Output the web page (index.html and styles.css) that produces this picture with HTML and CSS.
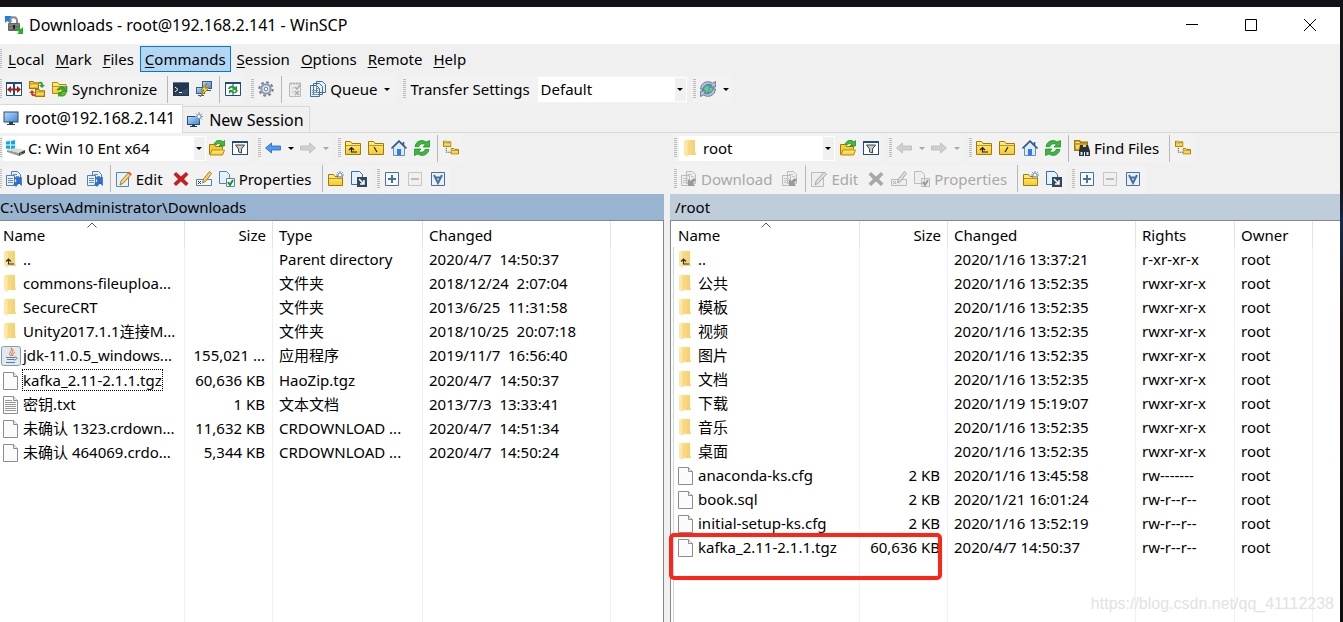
FILE: index.html
```html
<!DOCTYPE html>
<html lang="en">
<head>
<meta charset="utf-8">
<title>Downloads - root@192.168.2.141 - WinSCP</title>
<link rel="stylesheet" href="styles.css">
</head>
<body>
<svg class="defs" aria-hidden="true">
  <defs>
    <linearGradient id="fold" x1="0" x2="1"><stop offset="0" stop-color="#fbe092"/><stop offset="1" stop-color="#f5cf68"/></linearGradient>
    <linearGradient id="blue" x1="0" x2="1" y1="0" y2="1"><stop offset="0" stop-color="#b5dbff"/><stop offset="1" stop-color="#3f86d8"/></linearGradient>
    <linearGradient id="yel" x1="0" x2="0" y1="0" y2="1"><stop offset="0" stop-color="#fff08a"/><stop offset="1" stop-color="#f4c92e"/></linearGradient>
  </defs>
  <symbol id="app" viewBox="0 0 20 20"><path d="M1 1h7L6 3l2 3-2 2-3-2-2 2z" fill="#1c7df0"/><path d="M6 9V6c0-5 7-5 7 0v3" fill="none" stroke="#888" stroke-width="2"/><rect x="4" y="8" width="12" height="8" rx="1" fill="#666"/><path d="M5 10h10M5 13h10" stroke="#9b9b9b"/><path d="M9 10h2v4H9z" fill="#222"/><path d="M19 19v-7l-2 2-3-2-2 2 3 3-2 2z" fill="#21b421"/></symbol>
  <symbol id="compare" viewBox="0 0 16 16"><path d="M.5 1.500h7v13h-7zM8.500 1.500h7v13h-7z" fill="#fff" stroke="#204a82"/><path d="M0 2h16" stroke="#204a82" stroke-width="2"/><path d="M4 8.500h8" stroke="#b01818" stroke-width="2"/><path d="M5 5v7L1 8.500zM11 5v7l4-3.500z" fill="#b01818"/></symbol>
  <symbol id="mini" viewBox="0 0 9 7"><path d="M.5 6.500v-6h3l1 1h4v5z" fill="url(#yel)" stroke="#a87900"/><path d="M1 2.500h7" stroke="#b98c12"/></symbol>
  <symbol id="sync2" viewBox="0 0 16 16"><use href="#mini" x="0" y="0" width="10" height="8"/><use href="#mini" x="6" y="8" width="10" height="8"/><path d="M10 1c3-1 4 1 4 3h2l-3 3-3-3h2c0-1-1-2-2-1z" fill="#23a53a"/><path d="M6 15c-3 1-4-1-4-3H0l3-3 3 3H4c0 1 1 2 2 1z" fill="#d63421"/></symbol>
  <symbol id="folder" viewBox="0 0 16 16"><path d="M.5 14.500v-13h5l1.500 2h8.500v11z" fill="url(#yel)" stroke="#a87900"/><path d="M1 5.500h14" stroke="#c19516"/></symbol>
  <symbol id="sync" viewBox="0 0 16 16"><path d="M.5 12.500v-11h5l1.500 2h7v9z" fill="url(#yel)" stroke="#b28709"/><path d="M1 5.500h12" stroke="#c19516"/><path d="M5 9c2-4 6-4 8-2l2-2v6H9l2-2c-2-1-3-1-4 0z" fill="#2eac34" stroke="#137922" stroke-width=".5"/><path d="M6 11h5l-2 2c2 1 4 0 5-1 0 4-5 4-7 3l-1 1z" fill="#2eac34"/></symbol>
  <symbol id="term" viewBox="0 0 16 16"><rect width="16" height="14" y="1" fill="#24364b"/><path d="M0 1.500h16" stroke="#5c7e9f"/><path d="M1 14h14V7z" fill="#304b68"/><path d="M2 6l3 2.500L2 11M6 11.500h3" fill="none" stroke="#fff"/></symbol>
  <symbol id="putty" viewBox="0 0 16 16"><rect x="6.500" y=".5" width="9" height="7" fill="url(#blue)" stroke="#435b7a"/><rect x=".5" y="6.500" width="8" height="6" fill="url(#blue)" stroke="#435b7a"/><path d="M2 14.500h6M10 9.500h5" stroke="#435b7a"/><path d="M11 2L5 9l3 0-4 7 9-9-4 0z" fill="#ffd52a" stroke="#9b7100" stroke-width=".8"/></symbol>
  <symbol id="keep" viewBox="0 0 16 16"><path d="M.5 1.500h15v13H.5zM8 2v12" fill="#fff" stroke="#204a82"/><path d="M0 2h16" stroke="#204a82" stroke-width="2"/><path d="M3 8c1-4 5-4 7-2l2-1v4H8l1-1C7 6 6 7 5 8zM13 9c-1 4-5 4-7 2l-2 2V9h4l-1 1c2 2 3 1 4-1z" fill="#209c35"/></symbol>
  <symbol id="gear" viewBox="0 0 16 16"><circle cx="8" cy="8" r="6.700" fill="none" stroke="#728093" stroke-width="2" stroke-dasharray="2.700 2.560"/><circle cx="8" cy="8" r="4.700" fill="#dce4ed" stroke="#8a98aa" stroke-width="2"/><circle cx="8" cy="8" r="1.800" fill="#f8f8f8" stroke="#728093"/></symbol>
  <symbol id="queuex" viewBox="0 0 16 16"><path d="M2.500 2.500h11v13h-11z" fill="#ececec" stroke="#bbb"/><path d="M4 1v3M7 1v3M10 1v3M13 1v3" stroke="#b5b5b5"/><path d="M5 7h2M5 11h2" stroke="#bbb"/><path d="M8 6l2 2 3-4M8 10l4 4m0-4l-4 4" fill="none" stroke="#aaa" stroke-width="1.500"/></symbol>
  <symbol id="queue" viewBox="0 0 16 16"><path d="M6.500.500h6l3 3v8h-9zM3.500 2.500h6l3 3v8h-9zM.5 4.500h6l3 3v8h-9z" fill="#e6f2ff" stroke="#45709e"/><path d="M6.500 4.500v3h3M2 9.500h6M2 11.500h6M2 13.500h6" fill="none" stroke="#7397bd"/></symbol>
  <symbol id="globe" viewBox="0 0 16 16"><circle cx="8" cy="8" r="6.500" fill="#3c9ae5"/><path d="M4 8l2-3 3 1-1 4-2 2zM10 7l3-1-1 4-3 1z" fill="#6ad16c"/><path d="M.5 8C1 1 8-1 12.500 2L15.500.500V6H10l2-2C8 2 4 4 3 8zM15.500 8c-.5 7-7.500 9-12 6l-3 1.500V10H6l-2 2c4 2 8 0 9-4z" fill="#b5c0cc" stroke="#617185" stroke-width=".8"/></symbol>
  <symbol id="monitor" viewBox="0 0 16 16"><rect x="1" y="2" width="14" height="10" fill="url(#blue)" stroke="#344c6b"/><path d="M6 12h4v2h2v1H4v-1h2z" fill="#2d3a4b"/></symbol>
  <symbol id="newsess" viewBox="0 0 16 16"><rect x=".5" y="4.500" width="12" height="8" fill="url(#blue)" stroke="#344c6b"/><path d="M5 13h3v1h2v1H3v-1h2z" fill="#2d3a4b"/><path d="M12 0v9M8 4.500h8M9 1.500l6 6M15 1.500l-6 6" stroke="#7894ae"/><circle cx="12" cy="4.500" r="2" fill="#fff" stroke="#7894ae"/></symbol>
  <symbol id="drive" viewBox="0 0 20 16"><path d="M0 1.500L4 1v3.500H0zM5 1l4-1v4.500H5zM0 5.500h4v3.500L0 8.500zM5 5.500h4V10L5 9z" fill="#00aeef"/><path d="M1 10l8-2 10 2-6 3z" fill="#d9d9d9"/><path d="M1 10l12 3v3L1 12z" fill="#999"/><path d="M13 13l6-3v3l-6 3z" fill="#444"/><path d="M14 14h2" stroke="#6be36d"/></symbol>
  <symbol id="open" viewBox="0 0 16 16"><path d="M.5 14.500v-10h5l1 2h7v3" fill="#f4cd35" stroke="#a87900"/><path d="M1 15l2-5h12.500l-2 5z" fill="url(#yel)" stroke="#b98b08"/><path d="M5 4c2-4 6-5 9-2l1.500-1.500V6H10l2-2C9 3 8 4 7 5z" fill="#3cba38" stroke="#16851e" stroke-width=".7"/></symbol>
  <symbol id="filter" viewBox="0 0 16 16"><rect x=".5" y="1.500" width="15" height="13" fill="#fff" stroke="#204a82"/><path d="M0 2h16" stroke="#204a82" stroke-width="2"/><path d="M3.500 5h9L9.500 9v4l-3-1V9z" fill="#c8c8c8" stroke="#444"/></symbol>
  <symbol id="left" viewBox="0 0 16 16"><path d="M.5 8l6-5v3h9v4h-9v3z" fill="#4d9af2" stroke="#2465b7" stroke-width=".8"/></symbol>
  <symbol id="leftg" viewBox="0 0 16 16"><path d="M.5 8l6-5v3h9v4h-9v3z" fill="#d0d0d0" stroke="#b9b9b9" stroke-width=".8"/></symbol>
  <symbol id="right" viewBox="0 0 16 16"><path d="M15.500 8l-6-5v3h-9v4h9v3z" fill="#d0d0d0" stroke="#b9b9b9" stroke-width=".8"/></symbol>
  <symbol id="up" viewBox="0 0 16 16"><use href="#folder"/><path d="M6.500 8v4H12M4 10l2.500-2.500L9 10" fill="none" stroke="#222" stroke-width="1.200"/></symbol>
  <symbol id="rootb" viewBox="0 0 16 16"><use href="#folder"/><path d="M6 7l3 5" stroke="#222" stroke-width="1.200"/></symbol>
  <symbol id="roots" viewBox="0 0 16 16"><use href="#folder"/><path d="M9 7l-3 5" stroke="#222" stroke-width="1.200"/></symbol>
  <symbol id="home" viewBox="0 0 16 16"><path d="M2.500 7.500v8h11v-8L8 2z" fill="#dcebfb" stroke="#6b8db0"/><path d="M6 9h4v6.500H6z" fill="#2e7de0"/><path d="M.5 8.500L8 1l7.500 7.500M12.500 2v3" fill="none" stroke="#365d8d" stroke-width="1.600"/></symbol>
  <symbol id="refresh" viewBox="0 0 16 16"><path d="M1 6.500C2 1 8-1 12 2l3.500-1.500V7H9l2.500-2.500C8 3 6 4 5 6.500zM15 9.500c-1 5.500-7 7.500-11 4.500L.5 15.500V9H7l-2.500 2.500C8 13 10 12 11 9.500z" fill="#3db83c" stroke="#12861c" stroke-width=".7"/></symbol>
  <symbol id="tree" viewBox="0 0 17 16"><use href="#mini" width="9" height="7"/><use href="#mini" x="8" y="8" width="9" height="7"/><path d="M3.500 8v4.500H8" fill="none" stroke="#222" stroke-dasharray="1 1"/></symbol>
  <symbol id="copy" viewBox="0 0 16 16"><path d="M5.500.500h6l3 3v9h-9z" fill="#e6f2ff" stroke="#5480ae"/><path d="M.5 4.500h8v10h-8z" fill="#e6f2ff" stroke="#5480ae"/><path d="M2 7.500h5M2 9.500h5M2 11.500h5M7 3.500h4M10 5.500h3" stroke="#6790bb"/><path d="M15.500 6.500v8l-2.500-2.500-3 3.500-2.500-2.500 3.500-3-2.500-3.500z" fill="#2a71d0" stroke="#174f9d" stroke-width=".5"/></symbol>
  <symbol id="copyg" viewBox="0 0 16 16"><path d="M5.500.500h6l3 3v9h-9zM.5 4.500h8v10h-8z" fill="#eee" stroke="#bbb"/><path d="M2 7.500h5M2 9.500h5M2 11.500h5M7 3.500h4M10 5.500h3" stroke="#c4c4c4"/><path d="M7 15V8l2 2 4-3 2 2-3 3 2 3z" fill="#999"/></symbol>
  <symbol id="edit" viewBox="0 0 16 16"><path d="M.5 1.500h12v14H.5z" fill="#e9f3ff" stroke="#5b82aa"/><path d="M13 1l2.500 2-8 9-3.500 2 1-4z" fill="#ffd36a" stroke="#8d661e" stroke-width=".8"/><path d="M13 1l2.500 2-1 1.500-2.500-2z" fill="#dc6051"/></symbol>
  <symbol id="editg" viewBox="0 0 16 16"><path d="M.5 1.500h12v14H.5z" fill="#eee" stroke="#bbb"/><path d="M13 1l2.500 2-8 9-3.500 2 1-4z" fill="#ddd" stroke="#aaa"/></symbol>
  <symbol id="del" viewBox="0 0 16 16"><path d="M3 1l5 4.500L13 1l2.500 2.500L11 8l4.500 4.500L13 15l-5-4.500L3 15 .5 12.500 5 8 .5 3.500z" fill="currentColor"/></symbol>
  <symbol id="rename" viewBox="0 0 16 16"><path d="M.5 8.500h15v6H.5z" fill="#f7fbff" stroke="#5b82aa"/><path d="M2 10l3 3m0-3l-3 3" stroke="#333"/><path d="M13.500.500l2 2-6 8-3 1.500 1-4z" fill="#ffd05b" stroke="#8d661e" stroke-width=".8"/></symbol>
  <symbol id="renameg" viewBox="0 0 16 16"><path d="M.5 8.500h15v6H.5z" fill="#eee" stroke="#bbb"/><path d="M2 10l3 3m0-3l-3 3" stroke="#aaa"/><path d="M13.500.500l2 2-6 8-3 1.500 1-4z" fill="#ddd" stroke="#aaa"/></symbol>
  <symbol id="props" viewBox="0 0 16 16"><path d="M.5.500h7l3 3v9H.5z" fill="#e4f1ff" stroke="#5b82aa"/><path d="M7.500 7.500h8v8h-8z" fill="#fff" stroke="#5b82aa"/><path d="M9 11l2 3 3-5" fill="none" stroke="#199329" stroke-width="2"/></symbol>
  <symbol id="propsg" viewBox="0 0 16 16"><path d="M.5.500h7l3 3v9H.5zM7.500 7.500h8v8h-8z" fill="#eee" stroke="#bbb"/><path d="M9 11l2 3 3-5" fill="none" stroke="#999" stroke-width="2"/></symbol>
  <symbol id="newdir" viewBox="0 0 16 16"><path d="M.5 14.500v-11h5l1.500 2h7.500v9z" fill="url(#yel)" stroke="#a87900"/><path d="M1 7.500h13" stroke="#c19516"/><path d="M12 0v8M8 4h8M9 1l6 6M15 1L9 7" stroke="#7894ae"/><circle cx="12" cy="4" r="2" fill="#fff" stroke="#7894ae"/></symbol>
  <symbol id="link" viewBox="0 0 16 16"><path d="M.5.500h8l3 3v10H.5z" fill="#e4f1ff" stroke="#3d6b9c"/><path d="M6 6h10v10H6z" fill="#33475c"/><path d="M8 8l5 5m0-4v4H9" fill="none" stroke="#fff" stroke-width="1.500"/></symbol>
  <symbol id="plus" viewBox="0 0 16 16"><path d="M1.500 1.500h13v13h-13z" fill="#f5faff" stroke="#4b709d"/><path d="M4 8h8M8 4v8" stroke="#4b709d" stroke-width="2"/></symbol>
  <symbol id="minus" viewBox="0 0 16 16"><path d="M1.500 1.500h13v13h-13z" fill="#f0f0f0" stroke="#c6c6c6"/><path d="M4 8h8" stroke="#bdbdbd" stroke-width="2"/></symbol>
  <symbol id="vee" viewBox="0 0 16 16"><path d="M1.500 1.500h13v13h-13z" fill="#e8f3ff" stroke="#4b709d"/><path d="M4 4l4 8 4-8M5 6.500h6" fill="none" stroke="#4b709d" stroke-width="2"/></symbol>
  <symbol id="find" viewBox="0 0 16 16"><use href="#mini" width="14" height="11"/><path d="M6 5h3v2h3V5h2l2 6v5h-5v-4h-1v4H5v-5z" fill="#26313e"/><path d="M6.500 12h2v3h-2zM12.500 12h2v3h-2z" fill="#d6e2ee"/></symbol>
  <symbol id="fdir" viewBox="0 0 13 17"><path d="M2 0h9v11l1 4H2z" fill="url(#fold)"/><path d="M0 0l4 2v15l-4-2z" fill="#ffe8a6"/><path d="M4 2v13" stroke="#eecb70" stroke-width=".5"/></symbol>
  <symbol id="fup" viewBox="0 0 13 17"><use href="#fdir"/><path d="M4.500 8v5H10M2 10.500L4.500 8 7 10.500" fill="none" stroke="#333" stroke-width="1.200"/></symbol>
  <symbol id="file" viewBox="0 0 15 18"><path d="M.5.500h10l4 4v13H.5z" fill="#fbfbfb" stroke="#8d8d8d"/><path d="M10.500.500v4h4" fill="#eee" stroke="#8d8d8d"/></symbol>
  <symbol id="txt" viewBox="0 0 15 18"><use href="#file"/><path d="M2 4.500h7M2 6.500h11M2 8.500h11M2 10.500h11M2 12.500h11M2 14.500h11" stroke="#999"/></symbol>
  <symbol id="java" viewBox="0 0 20 20"><rect x=".5" y=".5" width="19" height="19" rx="2" fill="#e2e8ef" stroke="#8598ae"/><path d="M10 10C6 7 12 6 10 2c5 3-1 4 1 8M12 10c-1-2 1-3 2-4" fill="none" stroke="#e46f28"/><path d="M5 11.500h9M6 13.500h7M5 16.500h9M14 11c3 0 2 3-1 3" fill="none" stroke="#58789d"/></symbol>
</svg>

<div class="window">
  <header class="titlebar">
    <svg class="app-icon"><use href="#app"/></svg>
    <h1>Downloads - root@192.168.2.141 - WinSCP</h1>
    <div class="caption">
      <button aria-label="Minimize"><svg viewBox="0 0 12 12"><path d="M0 5.500h12"/></svg></button>
      <button aria-label="Maximize"><svg viewBox="0 0 12 12"><path d="M.5.500h11v11H.5z"/></svg></button>
      <button aria-label="Close"><svg viewBox="0 0 12 12"><path d="M0 0l12 12M12 0L0 12"/></svg></button>
    </div>
  </header>

  <nav class="menu">
    <i class="grip"></i>
    <button><u>L</u>ocal</button><button><u>M</u>ark</button><button><u>F</u>iles</button><button class="active"><u>C</u>ommands</button><button><u>S</u>ession</button><button><u>O</u>ptions</button><button><u>R</u>emote</button><button><u>H</u>elp</button>
  </nav>

  <div class="toolbar main-tools">
    <div class="band">
      <i class="grip"></i>
      <button aria-label="Compare directories"><svg><use href="#compare"/></svg></button>
      <button aria-label="Synchronize browsing"><svg><use href="#sync2"/></svg></button>
      <button class="text"><svg><use href="#sync"/></svg>Synchronize</button>
      <i class="sep"></i>
      <button aria-label="Console"><svg><use href="#term"/></svg></button>
      <button aria-label="PuTTY"><svg><use href="#putty"/></svg></button>
      <i class="sep"></i>
      <button aria-label="Keep up to date"><svg><use href="#keep"/></svg></button>
    </div>
    <div class="band">
      <i class="grip"></i>
      <button aria-label="Preferences"><svg><use href="#gear"/></svg></button>
      <i class="sep"></i>
      <button aria-label="Process queue" disabled><svg><use href="#queuex"/></svg></button>
      <button class="text"><svg><use href="#queue"/></svg>Queue<b class="arrow"></b></button>
    </div>
    <div class="band">
      <i class="grip"></i>
      <label for="transfer">Transfer Settings</label>
      <div class="combo transfer"><select id="transfer"><option>Default</option></select><b class="arrow"></b></div>
    </div>
    <div class="band">
      <i class="grip"></i>
      <button aria-label="Transfer presets"><svg><use href="#globe"/></svg><b class="arrow"></b></button>
    </div>
  </div>

  <div class="tabs">
    <button class="tab current"><svg><use href="#monitor"/></svg>root@192.168.2.141</button>
    <button class="tab"><svg><use href="#newsess"/></svg>New Session</button>
  </div>

  <main class="panes">
    <section class="pane local">
      <div class="toolbar">
        <div class="band">
          <i class="grip"></i>
          <div class="combo drive"><svg class="wide"><use href="#drive"/></svg><select aria-label="Local drive"><option>C: Win 10 Ent x64</option></select><b class="arrow"></b></div>
          <button aria-label="Open directory"><svg><use href="#open"/></svg></button>
          <button aria-label="Filter"><svg><use href="#filter"/></svg></button>
        </div>
        <div class="band">
          <i class="grip"></i>
          <button class="nav" aria-label="Back"><svg><use href="#left"/></svg><b class="arrow"></b></button>
          <button class="nav" aria-label="Forward" disabled><svg><use href="#right"/></svg><b class="arrow"></b></button>
        </div>
        <div class="band">
          <i class="grip"></i>
          <button aria-label="Parent directory"><svg><use href="#up"/></svg></button>
          <button aria-label="Root directory"><svg><use href="#rootb"/></svg></button>
          <button aria-label="Home directory"><svg><use href="#home"/></svg></button>
          <button aria-label="Refresh"><svg><use href="#refresh"/></svg></button>
          <i class="sep"></i>
          <button aria-label="Tree"><svg><use href="#tree"/></svg></button>
        </div>
      </div>
      <div class="toolbar">
        <div class="band">
          <i class="grip"></i>
          <button class="text"><svg><use href="#copy"/></svg>Upload</button>
          <button aria-label="Upload in background"><svg><use href="#copy"/></svg></button>
          <i class="sep"></i>
          <button class="text"><svg><use href="#edit"/></svg>Edit</button>
          <button class="delete" aria-label="Delete"><svg><use href="#del"/></svg></button>
          <button aria-label="Rename"><svg><use href="#rename"/></svg></button>
          <button class="text"><svg><use href="#props"/></svg>Properties</button>
          <i class="sep"></i>
          <button aria-label="New directory"><svg><use href="#newdir"/></svg></button>
          <button aria-label="New shortcut"><svg><use href="#link"/></svg></button>
        </div>
        <div class="band">
          <i class="grip"></i>
          <button aria-label="Select"><svg><use href="#plus"/></svg></button>
          <button aria-label="Unselect" disabled><svg><use href="#minus"/></svg></button>
          <button aria-label="Select all"><svg><use href="#vee"/></svg></button>
        </div>
      </div>
      <div class="path">C:\Users\Administrator\Downloads</div>
      <div class="list">
        <table>
          <colgroup><col class="c-name"><col class="c-size"><col class="c-type"><col class="c-changed"><col></colgroup>
          <thead><tr><th>Name<svg class="sort" viewBox="0 0 10 6"><path d="M.5 5.500L5 1l4.500 4.500"/></svg></th><th class="num">Size</th><th>Type</th><th>Changed</th><th></th></tr></thead>
          <tbody>
            <tr><td><svg class="dir"><use href="#fup"/></svg>..</td><td></td><td>Parent directory</td><td>2020/4/7&nbsp; 14:50:37</td><td></td></tr>
            <tr><td><svg class="dir"><use href="#fdir"/></svg>commons-fileuploa...</td><td></td><td>文件夹</td><td>2018/12/24&nbsp; 2:07:04</td><td></td></tr>
            <tr><td><svg class="dir"><use href="#fdir"/></svg>SecureCRT</td><td></td><td>文件夹</td><td>2013/6/25&nbsp; 11:31:58</td><td></td></tr>
            <tr><td><svg class="dir"><use href="#fdir"/></svg>Unity2017.1.1连接M...</td><td></td><td>文件夹</td><td>2018/10/25&nbsp; 20:07:18</td><td></td></tr>
            <tr><td><svg class="exe"><use href="#java"/></svg>jdk-11.0.5_windows...</td><td class="num">155,021 ...</td><td>应用程序</td><td>2019/11/7&nbsp; 16:56:40</td><td></td></tr>
            <tr><td><svg class="doc"><use href="#file"/></svg><span class="focus">kafka_2.11-2.1.1.tgz</span></td><td class="num">60,636 KB</td><td>HaoZip.tgz</td><td>2020/4/7&nbsp; 14:50:37</td><td></td></tr>
            <tr><td><svg class="doc"><use href="#txt"/></svg>密钥.txt</td><td class="num">1 KB</td><td>文本文档</td><td>2013/7/3&nbsp; 13:33:41</td><td></td></tr>
            <tr><td><svg class="doc"><use href="#file"/></svg>未确认 1323.crdown...</td><td class="num">11,632 KB</td><td>CRDOWNLOAD ...</td><td>2020/4/7&nbsp; 14:51:34</td><td></td></tr>
            <tr><td><svg class="doc"><use href="#file"/></svg>未确认 464069.crdo...</td><td class="num">5,344 KB</td><td>CRDOWNLOAD ...</td><td>2020/4/7&nbsp; 14:50:24</td><td></td></tr>
            <tr class="rest"><td></td><td></td><td></td><td></td><td></td></tr>
          </tbody>
        </table>
      </div>
    </section>

    <section class="pane remote">
      <div class="toolbar">
        <div class="band">
          <i class="grip"></i>
          <div class="combo dir-combo"><svg class="dir"><use href="#fdir"/></svg><select aria-label="Remote directory"><option>root</option></select><b class="arrow"></b></div>
          <button aria-label="Open directory"><svg><use href="#open"/></svg></button>
          <button aria-label="Filter"><svg><use href="#filter"/></svg></button>
        </div>
        <div class="band">
          <i class="grip"></i>
          <button class="nav" aria-label="Back" disabled><svg><use href="#leftg"/></svg><b class="arrow"></b></button>
          <button class="nav" aria-label="Forward" disabled><svg><use href="#right"/></svg><b class="arrow"></b></button>
        </div>
        <div class="band">
          <i class="grip"></i>
          <button aria-label="Parent directory"><svg><use href="#up"/></svg></button>
          <button aria-label="Root directory"><svg><use href="#roots"/></svg></button>
          <button aria-label="Home directory"><svg><use href="#home"/></svg></button>
          <button aria-label="Refresh"><svg><use href="#refresh"/></svg></button>
          <i class="sep"></i>
          <button class="text"><svg><use href="#find"/></svg>Find Files</button>
          <i class="sep"></i>
          <button aria-label="Tree"><svg><use href="#tree"/></svg></button>
        </div>
      </div>
      <div class="toolbar">
        <div class="band">
          <i class="grip"></i>
          <button class="text" disabled><svg><use href="#copyg"/></svg>Download</button>
          <button aria-label="Download in background" disabled><svg><use href="#copyg"/></svg></button>
          <i class="sep"></i>
          <button class="text" disabled><svg><use href="#editg"/></svg>Edit</button>
          <button aria-label="Delete" disabled><svg><use href="#del"/></svg></button>
          <button aria-label="Rename" disabled><svg><use href="#renameg"/></svg></button>
          <button class="text" disabled><svg><use href="#propsg"/></svg>Properties</button>
          <i class="sep"></i>
          <button aria-label="New directory"><svg><use href="#newdir"/></svg></button>
          <button aria-label="New link"><svg><use href="#link"/></svg></button>
        </div>
        <div class="band">
          <i class="grip"></i>
          <button aria-label="Select"><svg><use href="#plus"/></svg></button>
          <button aria-label="Unselect" disabled><svg><use href="#minus"/></svg></button>
          <button aria-label="Select all"><svg><use href="#vee"/></svg></button>
        </div>
      </div>
      <div class="path">/root</div>
      <div class="list">
        <table>
          <colgroup><col class="r-name"><col class="r-size"><col class="r-changed"><col class="r-rights"><col class="r-owner"><col></colgroup>
          <thead><tr><th>Name<svg class="sort" viewBox="0 0 10 6"><path d="M.5 5.500L5 1l4.500 4.500"/></svg></th><th class="num">Size</th><th>Changed</th><th>Rights</th><th>Owner</th><th></th></tr></thead>
          <tbody>
            <tr><td><svg class="dir"><use href="#fup"/></svg>..</td><td></td><td>2020/1/16 13:37:21</td><td>r-xr-xr-x</td><td>root</td><td></td></tr>
            <tr><td><svg class="dir"><use href="#fdir"/></svg>公共</td><td></td><td>2020/1/16 13:52:35</td><td>rwxr-xr-x</td><td>root</td><td></td></tr>
            <tr><td><svg class="dir"><use href="#fdir"/></svg>模板</td><td></td><td>2020/1/16 13:52:35</td><td>rwxr-xr-x</td><td>root</td><td></td></tr>
            <tr><td><svg class="dir"><use href="#fdir"/></svg>视频</td><td></td><td>2020/1/16 13:52:35</td><td>rwxr-xr-x</td><td>root</td><td></td></tr>
            <tr><td><svg class="dir"><use href="#fdir"/></svg>图片</td><td></td><td>2020/1/16 13:52:35</td><td>rwxr-xr-x</td><td>root</td><td></td></tr>
            <tr><td><svg class="dir"><use href="#fdir"/></svg>文档</td><td></td><td>2020/1/16 13:52:35</td><td>rwxr-xr-x</td><td>root</td><td></td></tr>
            <tr><td><svg class="dir"><use href="#fdir"/></svg>下载</td><td></td><td>2020/1/19 15:19:07</td><td>rwxr-xr-x</td><td>root</td><td></td></tr>
            <tr><td><svg class="dir"><use href="#fdir"/></svg>音乐</td><td></td><td>2020/1/16 13:52:35</td><td>rwxr-xr-x</td><td>root</td><td></td></tr>
            <tr><td><svg class="dir"><use href="#fdir"/></svg>桌面</td><td></td><td>2020/1/16 13:52:35</td><td>rwxr-xr-x</td><td>root</td><td></td></tr>
            <tr><td><svg class="doc"><use href="#file"/></svg>anaconda-ks.cfg</td><td class="num">2 KB</td><td>2020/1/16 13:45:58</td><td>rw-------</td><td>root</td><td></td></tr>
            <tr><td><svg class="doc"><use href="#file"/></svg>book.sql</td><td class="num">2 KB</td><td>2020/1/21 16:01:24</td><td>rw-r--r--</td><td>root</td><td></td></tr>
            <tr><td><svg class="doc"><use href="#file"/></svg>initial-setup-ks.cfg</td><td class="num">2 KB</td><td>2020/1/16 13:52:19</td><td>rw-r--r--</td><td>root</td><td></td></tr>
            <tr><td><svg class="doc"><use href="#file"/></svg>kafka_2.11-2.1.1.tgz</td><td class="num">60,636 KB</td><td>2020/4/7 14:50:37</td><td>rw-r--r--</td><td>root</td><td></td></tr>
            <tr class="rest"><td></td><td></td><td></td><td></td><td></td><td></td></tr>
          </tbody>
        </table>
        <div class="marker"></div>
      </div>
    </section>
  </main>
  <div class="watermark">https://blog.csdn.net/qq_41112238</div>
</div>
</body>
</html>
```
FILE: styles.css
```css
* { box-sizing: border-box; }

body {
  margin: 0;
  min-height: 100vh;
  display: flex;
  padding: 7px 3px 0 0;
  background: linear-gradient(#141216 0 30%, #16294a 36%, #1b1512 50%, #0d0d10);
  color: #000;
  font: 15px/24px "Noto Sans", "Noto Sans CJK SC", sans-serif;
  overflow: hidden;
}

.defs { position: absolute; width: 0; height: 0; }
svg { flex: none; width: 16px; height: 16px; }

button, select {
  margin: 0;
  padding: 0;
  border: 0;
  background: none;
  color: inherit;
  font: inherit;
  white-space: nowrap;
}

.window {
  flex: 1;
  min-width: 0;
  position: relative;
  display: flex;
  flex-direction: column;
  background: #f0f0f0;
}

.titlebar {
  display: flex;
  align-items: center;
  height: 37px;
  padding: 0 1px 2px 4px;
  gap: 5px;
  background: #fff;
}
.titlebar h1 { margin: 0; font-size: 16px; font-weight: 400; }
.app-icon { width: 20px; height: 20px; }
.caption { display: flex; margin-left: auto; height: 100%; }
.caption button { width: 59px; display: grid; place-items: center; }
.caption svg { width: 12px; height: 12px; fill: none; stroke: #000; }

.grip {
  flex: none;
  width: 3px;
  height: 20px;
  background: repeating-linear-gradient(#bbb 0 1px, transparent 1px 2px);
}

.menu { display: flex; align-items: center; gap: 1px; height: 30px; }
.menu .grip { width: 2px; }
.menu button { height: 26px; padding: 0 4px; border: 1px solid transparent; }
.menu .active { background: #b3d7f3; border-color: #0078d7; }
u { text-underline-offset: 2px; text-decoration-thickness: 1px; }

.toolbar { display: flex; align-items: center; height: 31px; gap: 6px; }
.main-tools { height: 30px; }
.band { display: flex; align-items: center; height: 28px; background: #f2f2f2; }
.band .grip { margin-right: 1px; }
.main-tools .band:first-child .grip,
.local .band:first-child .grip { width: 2px; }
.band button {
  display: flex;
  align-items: center;
  height: 26px;
  padding: 0 4px 0 3px;
  gap: 4px;
}
.band .text { padding-right: 7px; }
.band label { padding: 0 8px 0 3px; }
.band button:disabled { color: #a8a8a8; }
.sep { width: 1px; height: 27px; margin: 0 2px 0 3px; background: #b8b8b8; }
.arrow {
  flex: none;
  width: 0;
  border: 3px solid transparent;
  border-top-color: currentColor;
  border-bottom-width: 0;
}
.band button .arrow { margin-left: 3px; }
.band .nav { padding-right: 3px; }
.band .delete { color: #c52020; }

.combo {
  display: flex;
  align-items: center;
  height: 25px;
  padding-right: 4px;
  background: linear-gradient(#f0f0f0, #f0f0f0) right 1px top 1px / 11px 23px no-repeat #fff;
}
.combo select { flex: 1; min-width: 0; height: 100%; appearance: none; outline: 0; }
.transfer { width: 149px; padding-left: 3px; }
.drive { width: 203px; padding-left: 3px; gap: 2px; }
.dir-combo { width: 156px; margin: 0 2px 0 1px; padding-left: 5px; gap: 6px; }
.wide { width: 20px; }
.dir { width: 13px; height: 17px; }

.tabs { display: flex; align-items: flex-end; height: 29px; border-bottom: 1px solid #d9d9d9; font-size: 16px; }
.tab {
  display: flex;
  align-items: center;
  height: 26px;
  padding: 0 5px 0 4px;
  gap: 6px;
  border: 1px solid #d9d9d9;
  border-width: 1px 1px 0 0;
}
.tab.current { height: 29px; margin-bottom: -1px; padding: 0 7px 3px 3px; background: #fff; }

.panes { flex: 1; display: grid; grid-template-columns: 664fr 670fr; gap: 6px; min-height: 0; }
.pane { display: flex; flex-direction: column; min-width: 0; }
.local .toolbar:first-child, .remote .toolbar:first-child { height: 30px; }
.remote .toolbar { padding-left: 4px; }
.path { height: 27px; line-height: 27px; border-bottom: 1px solid #828790; background: #99b4d1; }
.remote .path { padding-left: 5px; background: #bfcddb; }

.list { flex: 1; display: flex; position: relative; background: #fff; min-height: 0; }
.local .list { border-right: 1px solid #828790; }
.remote .list { border-left: 1px solid #828790; padding-left: 2px; }
table { width: 100%; height: 100%; table-layout: fixed; border-collapse: separate; border-spacing: 0; }
th, td {
  height: 24px;
  padding: 0 0 0 6px;
  border-right: 1px solid #e8f1fc;
  text-align: left;
  font-weight: 400;
  white-space: nowrap;
  overflow: hidden;
}
th { position: relative; height: 26px; padding-top: 2px; border-color: #e2e2e2; }
th:last-child, td:last-child { border-right: 0; }
th:first-child { padding-left: 3px; }
td:first-child { padding-left: 4px; }
.remote th:first-child { padding-left: 5px; }
.remote tbody td:first-child { border-left: 1px solid #c3d9f5; padding-left: 5px; }
.num { text-align: right; padding-right: 7px; }
th.num { padding-right: 6px; }
td svg { vertical-align: middle; }
td .dir { margin: 0 6px 2px 0; }
td .doc { width: 15px; height: 18px; margin: 0 5px 2px -1px; }
td .exe { width: 20px; height: 20px; margin: 0 2px 2px -3px; }
.sort { position: absolute; top: 1px; left: 50%; width: 10px; height: 6px; margin-left: -5px; fill: none; stroke: #555; }
.focus { outline: 1px dotted #000; }
.rest td { height: auto; }

.c-name { width: 185px; }
.c-size { width: 88px; }
.c-type { width: 150px; }
.c-changed { width: 188px; }
.r-name { width: 187px; }
.r-size { width: 88px; }
.r-changed { width: 188px; }
.r-rights { width: 99px; }
.r-owner { width: 78px; }

.marker {
  position: absolute;
  left: -2px;
  top: 312px;
  width: 273px;
  height: 47px;
  border: 4px solid #ff2416;
  border-radius: 5px;
}
.watermark {
  position: absolute;
  right: 6px;
  bottom: 8px;
  color: #e2e2e2;
  font: 16px/20px "Liberation Sans", Arial, sans-serif;
}
```
